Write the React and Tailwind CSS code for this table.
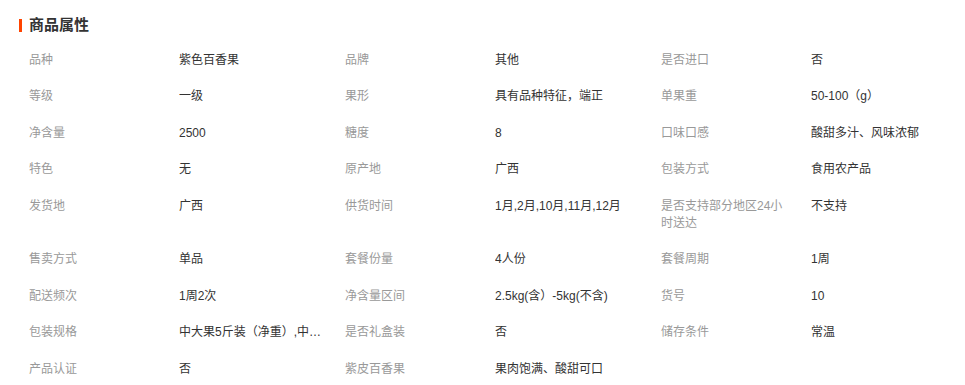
const attrs = [
  ["品种", "紫色百香果"],
  ["品牌", "其他"],
  ["是否进口", "否"],
  ["等级", "一级"],
  ["果形", "具有品种特征，端正"],
  ["单果重", "50-100（g）"],
  ["净含量", "2500"],
  ["糖度", "8"],
  ["口味口感", "酸甜多汁、风味浓郁"],
  ["特色", "无"],
  ["原产地", "广西"],
  ["包装方式", "食用农产品"],
  ["发货地", "广西"],
  ["供货时间", "1月,2月,10月,11月,12月"],
  ["是否支持部分地区24小时送达", "不支持"],
  ["售卖方式", "单品"],
  ["套餐份量", "4人份"],
  ["套餐周期", "1周"],
  ["配送频次", "1周2次"],
  ["净含量区间", "2.5kg(含）-5kg(不含)"],
  ["货号", "10"],
  ["包装规格", "中大果5斤装（净重）,中果5斤装（净重）"],
  ["是否礼盒装", "否"],
  ["储存条件", "常温"],
  ["产品认证", "否"],
  ["紫皮百香果", "果肉饱满、酸甜可口"],
];

export default function App() {
  return (
    <div className="w-[965px] h-[385px] bg-white font-['Liberation_Sans','Noto_Sans_CJK_SC',sans-serif] text-[12px] overflow-hidden">
      {/* Title */}
      <div className="flex items-center pl-[19px] pt-[15px] h-[35px]">
        <span className="w-[3px] h-[13px] bg-[#ff4400]" />
        <h3 className="ml-[7px] text-[15px] leading-[20px] font-bold text-[#333]">商品属性</h3>
      </div>

      {/* Attribute grid */}
      <div className="grid grid-cols-[316px_316px_316px] pl-[29px] mt-[7px]">
        {attrs.map(([label, value]) => (
          <div key={label} className="flex items-start py-[9.75px] leading-[17px]">
            <span className="w-[130px] mr-[20px] text-[#999] break-all">{label}</span>
            <span className="w-[148px] text-[#333] truncate">{value}</span>
          </div>
        ))}
      </div>
    </div>
  );
}
